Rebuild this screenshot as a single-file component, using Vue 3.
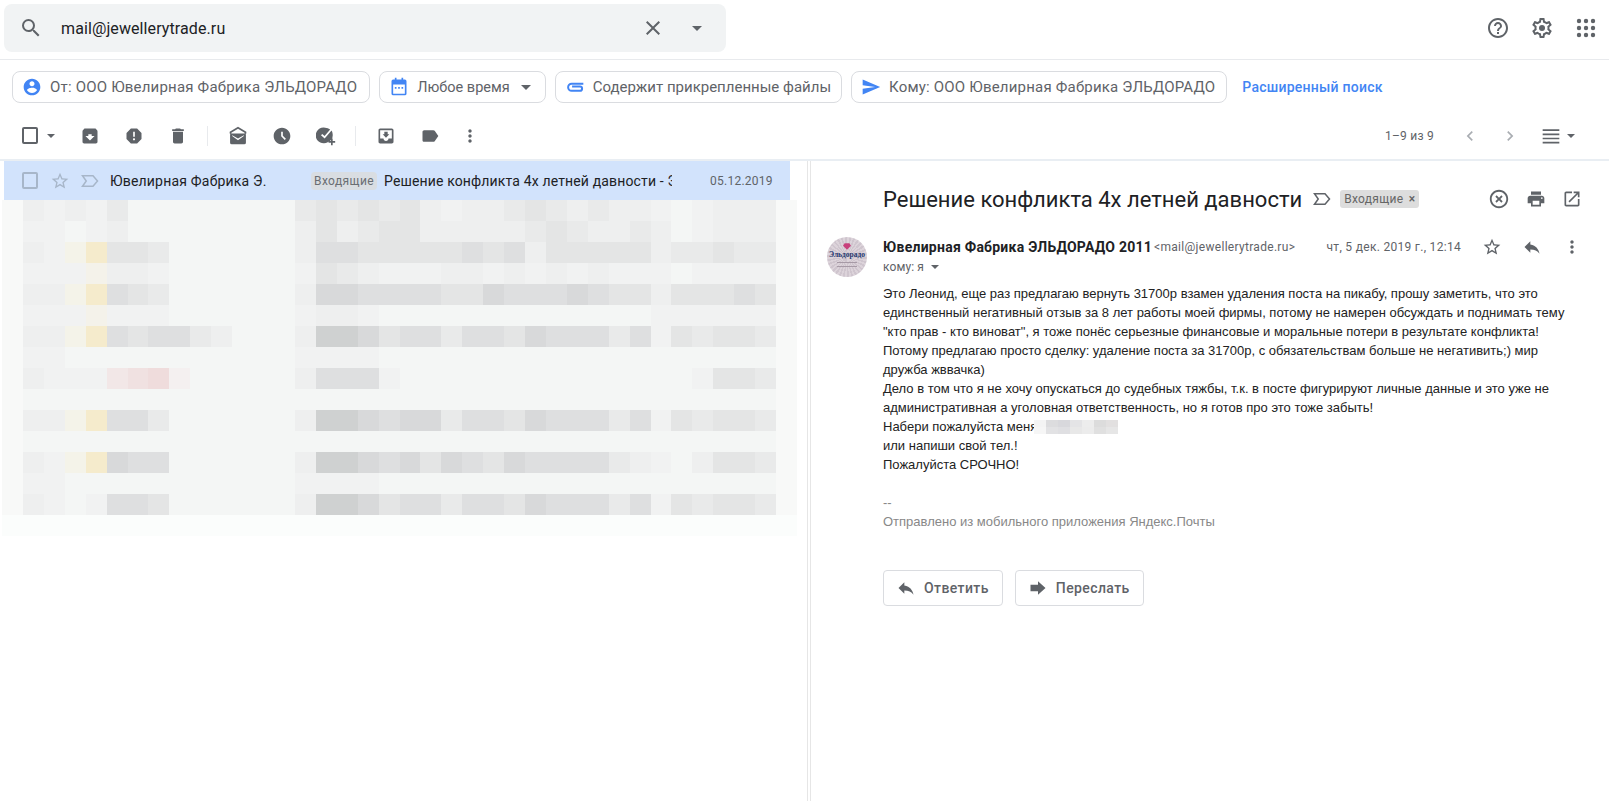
<template>
  <div class="page">
    <header class="top">
      <div class="search">
        <svg class="ic ic-24 search__lens" viewBox="0 0 24 24"><path :d="icons.search" /></svg>
        <span class="search__text">mail@jewellerytrade.ru</span>
        <svg class="ic ic-24 search__close" viewBox="0 0 24 24"><path :d="icons.close" /></svg>
        <span class="caret search__caret"></span>
      </div>
      <div class="top__right">
        <svg class="ic ic-24" viewBox="0 0 24 24"><path :d="icons.help" /></svg>
        <svg class="ic ic-24" viewBox="0 0 24 24"><path :d="icons.gear" /><circle cx="12" cy="12" r="3" /></svg>
        <svg class="ic ic-24" viewBox="0 0 24 24">
          <g v-for="y in [5, 12, 19]" :key="y">
            <circle v-for="x in [5, 12, 19]" :key="x" :cx="x" :cy="y" r="2.2" />
          </g>
        </svg>
      </div>
    </header>

    <div class="chips">
      <div class="chip chip--from">
        <svg class="chip__ic" viewBox="0 0 24 24"><path :d="icons.person" /></svg>
        <span>От: ООО Ювелирная Фабрика ЭЛЬДОРАДО</span>
      </div>
      <div class="chip chip--time">
        <svg class="chip__ic" viewBox="0 0 24 24">
          <path d="M7 1h2v3H7zM15 1h2v3h-2z" />
          <path d="M5 3h14a2 2 0 0 1 2 2v15a2 2 0 0 1-2 2H5a2 2 0 0 1-2-2V5a2 2 0 0 1 2-2zm0 6v11h14V9z" />
          <path d="M7 12h2v2H7zM11 12h2v2h-2zM15 12h2v2h-2z" />
        </svg>
        <span>Любое время</span>
        <span class="caret chip__caret"></span>
      </div>
      <div class="chip chip--files">
        <svg class="chip__ic" viewBox="0 0 24 24">
          <path class="clip" d="M22 8H8a4 4 0 0 0 0 8.500h10a2.500 2.500 0 0 0 0-5H8.500" />
        </svg>
        <span>Содержит прикрепленные файлы</span>
      </div>
      <div class="chip chip--to">
        <svg class="chip__ic" viewBox="0 0 24 24"><path d="M2.010 21L23 12 2.010 3 2 10l15 2-15 2z" /></svg>
        <span>Кому: ООО Ювелирная Фабрика ЭЛЬДОРАДО</span>
      </div>
      <a class="chips__link">Расширенный поиск</a>
    </div>

    <div class="toolbar">
      <div class="toolbar__check">
        <span class="box"></span>
        <span class="caret caret--small"></span>
      </div>
      <span class="tool"><svg class="ic" viewBox="0 0 24 24"><path :d="icons.archive" /></svg></span>
      <span class="tool"><svg class="ic" viewBox="0 0 24 24"><path :d="icons.report" /></svg></span>
      <span class="tool"><svg class="ic" viewBox="0 0 24 24"><path :d="icons.trash" /></svg></span>
      <span class="toolbar__sep"></span>
      <span class="tool">
        <svg class="ic" viewBox="0 0 24 24">
          <path d="M12 1 2 7v2l2 1V8l8-4.700L20 8v2l2-1V7z" />
          <path d="M4 9h16a1.500 1.500 0 0 1 1.500 1.500V20a2 2 0 0 1-2 2h-15a2 2 0 0 1-2-2v-9.500A1.500 1.500 0 0 1 4 9zm1 3 7 5 7-5v-1l-7 4-7-4z" fill-rule="evenodd" />
        </svg>
      </span>
      <span class="tool"><svg class="ic" viewBox="0 0 24 24"><path :d="icons.clock" /></svg></span>
      <span class="tool">
        <svg class="ic" viewBox="0 0 24 24">
          <path d="M11 2a9.500 9.500 0 0 1 6 2.200L10.300 12 7.500 9.500 6 11l4.400 4L18.600 5.500A9.500 9.500 0 0 1 20 9.500 9.600 9.600 0 0 1 14 19.500 9.500 9.500 0 1 1 11 2z" />
          <path d="M18 15h2v3h3v2h-3v3h-2v-3h-3v-2h3z" />
        </svg>
      </span>
      <span class="toolbar__sep"></span>
      <span class="tool"><svg class="ic" viewBox="0 0 24 24"><path :d="icons.moveTo" /></svg></span>
      <span class="tool"><svg class="ic" viewBox="0 0 24 24"><path :d="icons.label" /></svg></span>
      <span class="tool tool--more"><svg class="ic" viewBox="0 0 24 24"><path :d="icons.more" /></svg></span>

      <span class="toolbar__count">1–9 из 9</span>
      <span class="tool tool--nav"><svg class="ic ic--pale" viewBox="0 0 24 24"><path :d="icons.prev" /></svg></span>
      <span class="tool tool--nav"><svg class="ic ic--pale" viewBox="0 0 24 24"><path :d="icons.next" /></svg></span>
      <span class="toolbar__view">
        <svg class="ic" viewBox="0 0 24 24"><path d="M2 4h20v2H2zM2 9h20v2H2zM2 14h20v2H2zM2 19h20v2H2z" /></svg>
        <span class="caret caret--small"></span>
      </span>
    </div>

    <div class="main">
      <section class="list">
        <div class="row">
          <span class="box box--row"></span>
          <svg class="row__star" viewBox="0 0 24 24"><path :d="icons.star" /></svg>
          <svg class="row__mark" viewBox="0 0 24 24"><path class="mark" d="M2 5h14l6 7-6 7H2l5-7z" /></svg>
          <span class="row__name">Ювелирная Фабрика Э.</span>
          <span class="row__tag">Входящие</span>
          <span class="row__subject">Решение конфликта 4х летней давности - Это</span>
          <span class="row__date">05.12.2019</span>
        </div>
        <div class="mosaic">
          <template v-for="(row, r) in mosaic" :key="r">
            <i v-for="(c, i) in row" :key="i" :style="{ background: palette[c] }"></i>
          </template>
        </div>
      </section>

      <div class="split"></div>

      <section class="mail">
        <div class="mail__head">
          <h1 class="mail__title">Решение конфликта 4х летней давности</h1>
          <svg class="mail__mark" viewBox="0 0 24 24"><path class="mark mark--dark" d="M2 5h14l6 7-6 7H2l5-7z" /></svg>
          <span class="mail__tag">Входящие <b>×</b></span>
          <div class="mail__actions">
            <svg class="ic ic-22" viewBox="0 0 24 24"><path :d="icons.off" /></svg>
            <svg class="ic" viewBox="0 0 24 24"><path :d="icons.print" /></svg>
            <svg class="ic" viewBox="0 0 24 24"><path :d="icons.open" /></svg>
          </div>
        </div>

        <div class="sender">
          <div class="avatar">
            <svg class="avatar__gem" viewBox="0 0 10 8"><path d="M2 0h6l2 3-5 5-5-5z" /></svg>
            <span class="avatar__name">Эльдорадо</span>
            <span class="avatar__line"></span>
            <span class="avatar__line"></span>
          </div>
          <div class="sender__info">
            <div class="sender__top">
              <span class="sender__name">Ювелирная Фабрика ЭЛЬДОРАДО 2011</span>
              <span class="sender__mail">&lt;mail@jewellerytrade.ru&gt;</span>
              <span class="sender__date">чт, 5 дек. 2019 г., 12:14</span>
              <span class="sender__btn"><svg class="ic" viewBox="0 0 24 24"><path :d="icons.star" /></svg></span>
              <span class="sender__btn"><svg class="ic" viewBox="0 0 24 24"><path :d="icons.reply" /></svg></span>
              <span class="sender__btn"><svg class="ic" viewBox="0 0 24 24"><path :d="icons.more" /></svg></span>
            </div>
            <div class="sender__to">кому: я <span class="caret caret--small"></span></div>
          </div>
        </div>

        <div class="body">
          Это Леонид, еще раз предлагаю вернуть 31700р взамен удаления поста на пикабу, прошу заметить, что это<br>
          единственный негативный отзыв за 8 лет работы моей фирмы, потому не намерен обсуждать и поднимать тему<br>
          "кто прав - кто виноват", я тоже понёс серьезные финансовые и моральные потери в результате конфликта!<br>
          Потому предлагаю просто сделку: удаление поста за 31700р, с обязательствам больше не негативить;) мир<br>
          дружба жввачка)<br>
          Дело в том что я не хочу опускаться до судебных тяжбы, т.к. в посте фигурируют личные данные и это уже не<br>
          административная а уголовная ответственность, но я готов про это тоже забыть!<br>
          Набери пожалуйста меня<span class="phone"><i v-for="(c, i) in phone" :key="i" :style="{ background: c }"></i></span><br>
          или напиши свой тел.!<br>
          Пожалуйста СРОЧНО!<br>
          <br>
          <span class="body__sign">--<br>Отправлено из мобильного приложения Яндекс.Почты</span>
        </div>

        <div class="replies">
          <button class="reply">
            <svg class="ic reply__ic" viewBox="0 0 24 24"><path :d="icons.reply" /></svg>
            Ответить
          </button>
          <button class="reply">
            <svg class="ic reply__ic" viewBox="0 0 24 24"><path d="M3 8h9V4l9 8-9 8v-4H3z" /></svg>
            Переслать
          </button>
        </div>
      </section>
    </div>
  </div>
</template>

<script setup>
const icons = {
  search: 'M15.5 14h-.79l-.28-.27A6.471 6.471 0 0 0 16 9.5 6.5 6.5 0 1 0 9.5 16c1.61 0 3.09-.59 4.23-1.57l.27.28v.79l5 4.99L20.49 19l-4.99-5zm-6 0C7.01 14 5 11.99 5 9.5S7.01 5 9.5 5 14 7.01 14 9.5 11.99 14 9.5 14z',
  close: 'M19 6.41L17.59 5 12 10.59 6.41 5 5 6.41 10.59 12 5 17.59 6.41 19 12 13.41 17.59 19 19 17.59 13.41 12z',
  help: 'M11 18h2v-2h-2v2zm1-16C6.48 2 2 6.48 2 12s4.48 10 10 10 10-4.48 10-10S17.52 2 12 2zm0 18c-4.41 0-8-3.59-8-8s3.59-8 8-8 8 3.59 8 8-3.59 8-8 8zm0-14c-2.21 0-4 1.79-4 4h2c0-1.1.9-2 2-2s2 .9 2 2c0 2-3 1.75-3 5h2c0-2.25 3-2.5 3-5 0-2.21-1.79-4-4-4z',
  gear: 'M19.43 12.98c.04-.32.07-.64.07-.98 0-.34-.03-.66-.07-.98l2.11-1.65c.19-.15.24-.42.12-.64l-2-3.46c-.09-.16-.26-.25-.44-.25-.06 0-.12.01-.17.03l-2.49 1c-.52-.4-1.08-.73-1.69-.98l-.38-2.65C14.46 2.18 14.25 2 14 2h-4c-.25 0-.46.18-.49.42l-.38 2.65c-.61.25-1.17.59-1.69.98l-2.49-1c-.06-.02-.12-.03-.18-.03-.17 0-.34.09-.43.25l-2 3.46c-.13.22-.07.49.12.64l2.11 1.65c-.04.32-.07.65-.07.98 0 .33.03.66.07.98l-2.11 1.65c-.19.15-.24.42-.12.64l2 3.46c.09.16.26.25.44.25.06 0 .12-.01.17-.03l2.49-1c.52.4 1.08.73 1.69.98l.38 2.65c.03.24.24.42.49.42h4c.25 0 .46-.18.49-.42l.38-2.65c.61-.25 1.17-.59 1.69-.98l2.49 1c.06.02.12.03.18.03.17 0 .34-.09.43-.25l2-3.46c.12-.22.07-.49-.12-.64l-2.11-1.65zm-1.98-1.71c.04.31.05.52.05.73 0 .21-.02.43-.05.73l-.14 1.13.89.7 1.08.84-.7 1.21-1.27-.51-1.04-.42-.9.68c-.43.32-.84.56-1.25.73l-1.06.43-.16 1.13-.2 1.35h-1.4l-.19-1.35-.16-1.13-1.06-.43c-.43-.18-.83-.41-1.23-.71l-.91-.7-1.06.43-1.27.51-.7-1.21 1.08-.84.89-.7-.14-1.13c-.03-.31-.05-.54-.05-.74s.02-.43.05-.73l.14-1.13-.89-.7-1.08-.84.7-1.21 1.27.51 1.04.42.9-.68c.43-.32.84-.56 1.25-.73l1.06-.43.16-1.13.2-1.35h1.39l.19 1.35.16 1.13 1.06.43c.43.18.83.41 1.23.71l.91.7 1.06-.43 1.27-.51.7 1.21-1.07.85-.89.7.14 1.13z',
  person: 'M12 2C6.48 2 2 6.48 2 12s4.48 10 10 10 10-4.48 10-10S17.52 2 12 2zm0 3c1.66 0 3 1.34 3 3s-1.34 3-3 3-3-1.34-3-3 1.34-3 3-3zm0 14.2c-2.5 0-4.71-1.28-6-3.22.03-1.99 4-3.08 6-3.08 1.99 0 5.97 1.09 6 3.08-1.29 1.94-3.5 3.22-6 3.22z',
  archive: 'M20.54 5.23l-1.39-1.68C18.88 3.21 18.47 3 18 3H6c-.47 0-.88.21-1.16.55L3.46 5.23C3.17 5.57 3 6.02 3 6.5V19c0 1.1.9 2 2 2h14c1.1 0 2-.9 2-2V6.5c0-.48-.17-.93-.46-1.27zM12 17.5L6.5 12H10v-2h4v2h3.5L12 17.5z',
  report: 'M15.73 3H8.27L3 8.27v7.46L8.27 21h7.46L21 15.73V8.27L15.73 3zM12 17.3c-.72 0-1.3-.58-1.3-1.3 0-.72.58-1.3 1.3-1.3.72 0 1.3.58 1.3 1.3 0 .72-.58 1.3-1.3 1.3zm1-4.3h-2V7h2v6z',
  trash: 'M6 19c0 1.1.9 2 2 2h8c1.1 0 2-.9 2-2V7H6v12zM19 4h-3.5l-1-1h-5l-1 1H5v2h14V4z',
  clock: 'M11.99 2C6.47 2 2 6.48 2 12s4.47 10 9.99 10C17.52 22 22 17.52 22 12S17.52 2 11.99 2zm3.3 14.71L11 12.41V7h2v4.59l3.71 3.71-1.42 1.41z',
  moveTo: 'M19 3H4.99c-1.11 0-1.98.89-1.98 2L3 19c0 1.1.88 2 1.99 2H19c1.1 0 2-.9 2-2V5c0-1.11-.9-2-2-2zm0 12h-4c0 1.66-1.35 3-3 3s-3-1.34-3-3H4.99V5H19v10zm-3-5h-2V7h-4v3H8l4 4 4-4z',
  label: 'M17.63 5.84C17.27 5.33 16.67 5 16 5L5 5.01C3.9 5.01 3 5.9 3 7v10c0 1.1.9 1.99 2 1.99L16 19c.67 0 1.27-.33 1.63-.84L22 12l-4.37-6.16z',
  more: 'M12 8c1.1 0 2-.9 2-2s-.9-2-2-2-2 .9-2 2 .9 2 2 2zm0 2c-1.1 0-2 .9-2 2s.9 2 2 2 2-.9 2-2-.9-2-2-2zm0 6c-1.1 0-2 .9-2 2s.9 2 2 2 2-.9 2-2-.9-2-2-2z',
  prev: 'M15.41 7.41L14 6l-6 6 6 6 1.41-1.41L10.83 12z',
  next: 'M8.59 16.59L10 18l6-6-6-6-1.41 1.41L13.17 12z',
  star: 'M22 9.24l-7.19-.62L12 2 9.19 8.63 2 9.24l5.46 4.73L5.82 21 12 17.27 18.18 21l-1.63-7.03L22 9.24zM12 15.4l-3.76 2.27 1-4.28-3.32-2.88 4.38-.38L12 6.1l1.71 4.04 4.38.38-3.32 2.88 1 4.28L12 15.4z',
  reply: 'M10 9V5l-7 7 7 7v-4.100c5 0 8.500 1.600 11 5.100-1-5-4-10-11-11z',
  off: 'M14.59 8L12 10.59 9.41 8 8 9.41 10.59 12 8 14.59 9.41 16 12 13.41 14.59 16 16 14.59 13.41 12 16 9.41 14.59 8zM12 2C6.47 2 2 6.47 2 12s4.47 10 10 10 10-4.47 10-10S17.53 2 12 2zm0 18c-4.41 0-8-3.59-8-8s3.59-8 8-8 8 3.59 8 8-3.59 8-8 8z',
  print: 'M19 8H5c-1.66 0-3 1.34-3 3v6h4v4h12v-4h4v-6c0-1.66-1.34-3-3-3zm-3 11H8v-5h8v5zm3-7c-.55 0-1-.45-1-1s.45-1 1-1 1 .45 1 1-.45 1-1 1zm-1-9H6v4h12V3z',
  open: 'M19 19H5V5h7V3H5c-1.11 0-2 .9-2 2v14c0 1.1.89 2 2 2h14c1.1 0 2-.9 2-2v-7h-2v7zM14 3v2h3.59l-9.83 9.83 1.41 1.41L19 6.41V10h2V3h-7z'
}

// the blurred-out rows of the list, one character per cell
const palette = {
  '~': '#fbfdfc',
  ',': '#f8f9f8',
  '.': '#f4f6f5',
  '-': '#f1f2f2',
  '=': '#eeefef',
  '+': '#e9eaea',
  '*': '#e4e5e5',
  '#': '#dedfe0',
  '%': '#d8d9da',
  '@': '#cfd1d1',
  z: '#f4f2ea',
  w: '#f4f3e9',
  Y: '#f5ebcc',
  p: '#f2e7e7',
  P: '#f0e1e1',
  Q: '#efdcdc',
  q: '#f4f0f0'
}

const mosaic = [
  ', =-=-+ ........ + *+*+*=-==+*+=+== -.-===,',
  ', --.-= ........ = *=+**=====+*+==+ =.-===,',
  ', =-wY **+ ...... = ##*****#*#=***** =++*++,',
  ', ---z ==- ...... - *+=---==-=-=-=-- -.----,',
  ', ==wY #*+ ...... = %%####**%###%#** =***#*,',
  ', ---z --- ...... - ==-............. ------,',
  ', ==wY #*##+=... = @@%*##+##*%###+# -*+**+,',
  ', --.. ......... - ---............. ......,',
  ', =--- pPQq..... = ###-............ ..-**+,',
  ', .... ......... . ................ ......,',
  ', ==wY ##+...... = @@%#%%+##*%###+# -*+**+,',
  ', .... ......... . ................ ......,',
  ', =-wY %##...... = @@%#%*%#*%####+= -.=**+,',
  ', --.. ......... - ---............. ......,',
  ', =-.- ##*...... = @@%*##+##*%###+# -*+**+,',
  '~~~~~~~~~~~~~~~~~~~~~~~~~~~~~~~~~~~~~~'
].map(row => row.replace(/ /g, '').split(''))

const phone = [
  '#f4f4f4', '#dcdcde', '#d8d8dc', '#e4e4e6', '#ededed', '#dcdcdc', '#e2e0e0',
  '#f6f6f6', '#e2e2e4', '#dfdfe2', '#e8e8e8', '#ececec', '#e0e0e0', '#e6e6e6'
]
</script>

<style>
html,
body {
  margin: 0;
  background: #fff;
}
</style>

<style scoped>
.page {
  width: 1609px;
  height: 801px;
  display: flex;
  flex-direction: column;
  overflow: hidden;
  font-family: Roboto, "Liberation Sans", sans-serif;
  color: #202124;
}

.ic {
  display: block;
  width: 20px;
  height: 20px;
  fill: #5f6368;
  flex: none;
}

.ic-24 {
  width: 24px;
  height: 24px;
}

.ic-22 {
  width: 22px;
  height: 22px;
}

.ic--pale {
  fill: #a9adb2;
}

.caret {
  display: inline-block;
  width: 0;
  height: 0;
  border-left: 5px solid transparent;
  border-right: 5px solid transparent;
  border-top: 5px solid #5f6368;
}

.caret--small {
  border-left-width: 4px;
  border-right-width: 4px;
  border-top-width: 4px;
}

/* top bar */
.top {
  height: 59px;
  flex: none;
  display: flex;
  align-items: flex-start;
  border-bottom: 1px solid #e8eaed;
}

.search {
  width: 722px;
  height: 48px;
  margin: 4px 0 0 4px;
  display: flex;
  align-items: center;
  background: #f1f3f4;
  border-radius: 8px;
}

.search__lens {
  margin-left: 15px;
}

.search__text {
  margin-left: 18px;
  font-size: 16px;
  letter-spacing: .1px;
  color: #202124;
  flex: 1;
}

.search__caret {
  margin: 0 24px 0 27px;
}

.top__right {
  margin-left: auto;
  height: 56px;
  padding-right: 11px;
  display: flex;
  align-items: center;
  gap: 20px;
}

/* search chips */
.chips {
  height: 54px;
  flex: none;
  display: flex;
  align-items: center;
  padding: 0 0 0 12px;
  box-sizing: border-box;
  gap: 9px;
}

.chip {
  height: 32px;
  box-sizing: border-box;
  display: flex;
  align-items: center;
  gap: 8px;
  padding: 0 12px 0 9px;
  border: 1px solid #dadce0;
  border-radius: 8px;
  font-size: 15px;
  color: #5f6368;
  letter-spacing: .2px;
  white-space: nowrap;
}

.chip--time {
  font-size: 14.5px;
  letter-spacing: 0;
}

.chip--files {
  padding-right: 10px;
  letter-spacing: 0;
}

.chip--to {
  padding-right: 11px;
}

.chip__ic {
  width: 20px;
  height: 20px;
  fill: #4285f4;
  flex: none;
}

.clip {
  fill: none;
  stroke: #4285f4;
  stroke-width: 2.4;
}

.chip__caret {
  margin-left: 3px;
  margin-right: 2px;
}

.chips__link {
  margin-left: 6px;
  font-size: 14px;
  font-weight: 500;
  color: #4285f4;
  letter-spacing: .25px;
}

/* toolbar */
.toolbar {
  height: 45px;
  flex: none;
  display: flex;
  align-items: center;
  box-sizing: border-box;
  padding: 0 0 2px 22px;
}

.toolbar__check {
  width: 46px;
  display: flex;
  align-items: center;
  gap: 9px;
}

.box {
  display: block;
  width: 12px;
  height: 13px;
  border: 2px solid #5f6368;
  border-radius: 2px;
  flex: none;
}

.tool {
  width: 44px;
  height: 40px;
  display: flex;
  align-items: center;
  justify-content: center;
  flex: none;
}

.tool--more {
  width: 36px;
}

.tool--nav {
  width: 40px;
}

.toolbar__sep {
  width: 1px;
  height: 20px;
  margin: 0 8px 0 7px;
  background: #e8eaed;
  flex: none;
}

.toolbar__count {
  margin-left: auto;
  margin-right: 16px;
  font-size: 12px;
  letter-spacing: .25px;
  color: #5f6368;
}

.toolbar__view {
  width: 79px;
  box-sizing: border-box;
  padding-left: 11px;
  display: flex;
  align-items: center;
  gap: 6px;
}

/* split list and reading pane */
.main {
  flex: 1;
  display: flex;
  min-height: 0;
  border-top: 2px solid #e9eef3;
}

.list {
  width: 806px;
  flex: none;
}

.split {
  width: 2px;
  margin-left: 1px;
  flex: none;
  border-left: 1px solid #e6e6e6;
  border-right: 1px solid #e6e6e6;
}

.row {
  height: 39px;
  width: 786px;
  margin-left: 4px;
  display: flex;
  align-items: center;
  background: #d2e3fc;
  font-size: 14px;
}

.box--row {
  margin-left: 18px;
  border-color: #a7b6c9;
}

.row__star {
  width: 20px;
  height: 20px;
  margin-left: 12px;
  fill: #a7b6c9;
  flex: none;
}

.row__mark {
  width: 18px;
  height: 18px;
  margin-left: 11px;
  flex: none;
}

.mark {
  fill: none;
  stroke: #a7b6c9;
  stroke-width: 2;
}

.mark--dark {
  stroke: #5f6368;
}

.row__name {
  margin-left: 11px;
  width: 201px;
  letter-spacing: .2px;
  flex: none;
}

.row__tag {
  height: 18px;
  line-height: 18px;
  padding: 0 3px;
  border-radius: 4px;
  background: #d9dde2;
  font-size: 12px;
  letter-spacing: .4px;
  color: #6a6e73;
  flex: none;
}

.row__subject {
  margin-left: 7px;
  width: 288px;
  overflow: hidden;
  white-space: nowrap;
  letter-spacing: .15px;
  flex: none;
}

.row__date {
  margin-left: 38px;
  font-size: 12px;
  letter-spacing: .25px;
  color: #5f6368;
}

.mosaic {
  width: 795px;
  margin-left: 2px;
  display: grid;
  grid-template-columns: repeat(38, 1fr);
  grid-auto-rows: 21px;
}

.mail {
  flex: 1;
  min-width: 0;
}

.mail__head {
  height: 76px;
  display: flex;
  align-items: center;
  padding: 0 27px 0 72px;
  box-sizing: border-box;
}

.mail__title {
  margin: 0;
  font-size: 22px;
  font-weight: 400;
  color: #202124;
  white-space: nowrap;
}

.mail__mark {
  width: 18px;
  height: 18px;
  margin-left: 11px;
  flex: none;
}

.mail__tag {
  margin-left: 9px;
  height: 18px;
  line-height: 18px;
  padding: 0 4px;
  border-radius: 3px;
  background: #dddddd;
  font-size: 12px;
  color: #666;
  letter-spacing: .3px;
}

.mail__tag b {
  font-weight: 500;
  margin-left: 2px;
}

.mail__actions {
  margin-left: auto;
  display: flex;
  align-items: center;
  gap: 16px;
}

.sender {
  display: flex;
  padding-left: 16px;
  gap: 16px;
}

.avatar {
  width: 40px;
  height: 40px;
  border-radius: 50%;
  flex: none;
  display: flex;
  flex-direction: column;
  align-items: center;
  padding-top: 6px;
  box-sizing: border-box;
  overflow: hidden;
  background: repeating-conic-gradient(#dcd3da 0 6deg, #cfc5ce 6deg 12deg);
}

.avatar__gem {
  width: 8px;
  height: 7px;
  fill: #c8407c;
  flex: none;
}

.avatar__name {
  font-family: "Liberation Serif", serif;
  font-size: 7.5px;
  font-weight: 700;
  line-height: 9px;
  color: #26386e;
  white-space: nowrap;
}

.avatar__line {
  width: 20px;
  height: 1px;
  margin-top: 3px;
  background: #a79aa6;
  flex: none;
}

.sender__info {
  flex: 1;
  min-width: 0;
}

.sender__top {
  height: 20px;
  display: flex;
  align-items: center;
  padding-right: 17px;
  white-space: nowrap;
}

.sender__name {
  font-size: 14px;
  font-weight: 700;
  letter-spacing: .25px;
  color: #202124;
}

.sender__mail {
  margin-left: 2px;
  font-size: 12px;
  letter-spacing: .3px;
  color: #5f6368;
}

.sender__date {
  margin-left: auto;
  margin-right: 11px;
  font-size: 12px;
  letter-spacing: .3px;
  color: #5f6368;
}

.sender__btn {
  width: 40px;
  display: flex;
  justify-content: center;
}

.sender__to {
  font-size: 12px;
  line-height: 20px;
  letter-spacing: .1px;
  color: #5f6368;
  display: flex;
  align-items: center;
  gap: 7px;
}

.body {
  margin: 7px 0 0 72px;
  font-family: "Liberation Sans", Arial, sans-serif;
  font-size: 13px;
  line-height: 19px;
  color: #222;
  white-space: nowrap;
}

.body__sign {
  color: #888;
}

.phone {
  display: inline-grid;
  grid-template-columns: repeat(7, 12px);
  grid-auto-rows: 7px;
  margin: -4px 0 -4px -3px;
  vertical-align: 4px;
}

.replies {
  display: flex;
  gap: 12px;
  margin: 39px 0 0 72px;
}

.reply {
  height: 36px;
  padding: 0 13px 0 12px;
  display: flex;
  align-items: center;
  gap: 6px;
  background: #fff;
  border: 1px solid #dadce0;
  border-radius: 4px;
  font-family: Roboto, sans-serif;
  font-size: 14px;
  font-weight: 500;
  letter-spacing: .4px;
  color: #5f6368;
}

.reply__ic {
  margin-right: 2px;
}
</style>
